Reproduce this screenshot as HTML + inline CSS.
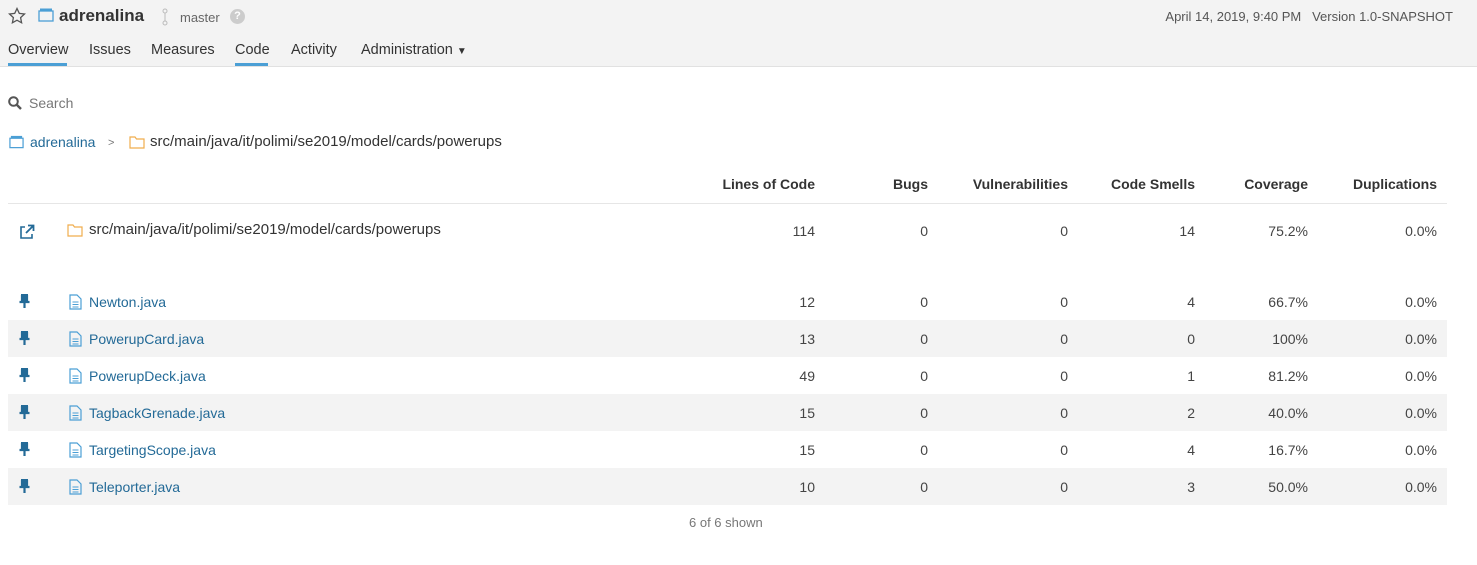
<!DOCTYPE html>
<html><head><style>
body{margin:0;width:1477px;height:565px;background:#fff;font-family:"Liberation Sans",sans-serif;font-size:14px;color:#444;position:relative;overflow:hidden}
.hdr{position:absolute;left:0;top:0;width:1477px;height:66px;background:#f3f3f3;border-bottom:1px solid #e1e1e1}
.a{position:absolute;white-space:nowrap}
.tab{position:absolute;top:42px;font-size:14.5px;color:#333}
.ul{position:absolute;top:63px;height:3px;background:#4b9fd5}
.blue{color:#236a97}
.row{position:absolute;left:8px;width:1439px;height:37px}
.alt{background:#f3f3f3}
.c{position:absolute;top:11px;text-align:right;white-space:nowrap}
</style></head><body>
<div class="hdr"></div>
<svg class="a" style="left:8px;top:7px" width="18" height="18" viewBox="0 0 18 18"><path d="M9 1.5l2.3 4.9 5.2.6-3.9 3.6 1 5.2L9 13.2l-4.6 2.6 1-5.2L1.5 7l5.2-.6z" fill="none" stroke="#555" stroke-width="1.3"/></svg>
<svg class="a" style="left:38px;top:8px" width="16" height="14" viewBox="0 0 16 14"><rect x="1" y="3" width="14" height="10" fill="none" stroke="#4b9fd5" stroke-width="1.3"/><rect x="2" y="0.5" width="12" height="2.5" fill="#4b9fd5"/></svg>
<div class="a" style="left:59px;top:6px;font-size:17px;font-weight:bold;color:#333">adrenalina</div>
<svg class="a" style="left:162px;top:8px" width="6" height="18"><circle cx="3" cy="3" r="2" fill="none" stroke="#bbb"/><circle cx="3" cy="15" r="2" fill="none" stroke="#bbb"/><line x1="3" y1="5" x2="3" y2="13" stroke="#bbb"/></svg>
<div class="a" style="left:180px;top:10px;font-size:13px;color:#666">master</div>
<div class="a" style="left:230px;top:9px;width:15px;height:15px;border-radius:50%;background:#ccc;color:#fff;font-size:11px;font-weight:bold;text-align:center;line-height:15px">?</div>
<div class="a" style="right:24px;top:9px;font-size:13px;color:#555">April 14, 2019, 9:40 PM&nbsp;&nbsp;&nbsp;Version 1.0-SNAPSHOT</div>
<div class="tab" style="left:8px">Overview</div><div class="ul" style="left:8px;width:59px"></div>
<div class="tab" style="left:89px">Issues</div>
<div class="tab" style="left:151px">Measures</div>
<div class="tab" style="left:235px">Code</div><div class="ul" style="left:235px;width:33px"></div>
<div class="tab" style="left:291px">Activity</div>
<div class="tab" style="left:361px">Administration <span style="font-size:10px">▼</span></div>
<svg class="a" style="left:8px;top:96px" width="14" height="14"><circle cx="5.5" cy="5.5" r="4.3" fill="none" stroke="#555" stroke-width="2"/><line x1="8.5" y1="8.5" x2="13" y2="13" stroke="#555" stroke-width="2.4"/></svg>
<div class="a" style="left:29px;top:95px;color:#777">Search</div>
<svg class="a" style="left:9px;top:135px" width="15" height="14" viewBox="0 0 16 14"><rect x="1" y="3" width="14" height="10" fill="none" stroke="#4b9fd5" stroke-width="1.3"/><rect x="2" y="0.5" width="12" height="2.5" fill="#4b9fd5"/></svg>
<div class="a blue" style="left:30px;top:134px">adrenalina</div>
<div class="a" style="left:108px;top:137px;font-size:11px;color:#777">&gt;</div>
<svg class="a" style="left:129px;top:135px" width="16" height="14"><path d="M1 2h5l1.5 2H15v9H1z" fill="none" stroke="#f0ad4e" stroke-width="1.2"/></svg>
<div class="a" style="left:150px;top:133px;color:#333;font-size:15px">src/main/java/it/polimi/se2019/model/cards/powerups</div>
<div class="a" style="left:8px;top:203px;width:1439px;height:1px;background:#e6e6e6"></div>
<div class="a" style="top:176px;left:0;width:1477px;font-weight:bold;color:#333">
<span class="a" style="right:662px">Lines of Code</span><span class="a" style="right:549px">Bugs</span><span class="a" style="right:409px">Vulnerabilities</span><span class="a" style="right:282px">Code Smells</span><span class="a" style="right:169px">Coverage</span><span class="a" style="right:40px">Duplications</span></div>
<svg class="a" style="left:19px;top:224px" width="16" height="15"><path d="M6 3H2v11h11v-4" fill="none" stroke="#236a97" stroke-width="1.6"/><path d="M7 9l7-7M9 1.5h5.5V7" fill="none" stroke="#236a97" stroke-width="1.8"/></svg>
<svg class="a" style="left:67px;top:223px" width="16" height="14"><path d="M1 2h5l1.5 2H15v9H1z" fill="none" stroke="#f0ad4e" stroke-width="1.2"/></svg>
<div class="a" style="left:89px;top:221px;color:#333;font-size:15px">src/main/java/it/polimi/se2019/model/cards/powerups</div>
<div class="row" style="top:212px">
<span class="c" style="right:632px">114</span><span class="c" style="right:519px">0</span><span class="c" style="right:379px">0</span><span class="c" style="right:252px">14</span><span class="c" style="right:139px">75.2%</span><span class="c" style="right:10px">0.0%</span></div>

<div id="rows"></div>
<script>
var d=[["Newton.java",12,4,"66.7%"],["PowerupCard.java",13,0,"100%"],["PowerupDeck.java",49,1,"81.2%"],["TagbackGrenade.java",15,2,"40.0%"],["TargetingScope.java",15,4,"16.7%"],["Teleporter.java",10,3,"50.0%"]];
var h="";d.forEach(function(r,i){var t=283+37*i;
h+='<div class="row'+(i%2?' alt':'')+'" style="top:'+t+'px">'+
'<svg class="a" style="left:11px;top:11px" width="11" height="14"><path d="M2 1h7M3 1v6M8 1v6M0.5 8h10M5.5 8v6" stroke="#236a97" stroke-width="2.2" fill="none"/><rect x="3" y="1" width="5" height="6" fill="#236a97"/></svg>'+
'<svg class="a" style="left:61px;top:11px" width="13" height="16"><path d="M1 1h7l4 4v10H1z" fill="none" stroke="#4b9fd5" stroke-width="1.2"/><path d="M3.5 8h6M3.5 10.5h6M3.5 13h6" stroke="#4b9fd5"/></svg>'+
'<span class="a blue" style="left:81px;top:11px">'+r[0]+'</span>'+
'<span class="c" style="right:632px">'+r[1]+'</span><span class="c" style="right:519px">0</span><span class="c" style="right:379px">0</span><span class="c" style="right:252px">'+r[2]+'</span><span class="c" style="right:139px">'+r[3]+'</span><span class="c" style="right:10px">0.0%</span></div>';});
document.getElementById("rows").innerHTML=h;
</script>
<div class="a" style="left:689px;top:515px;font-size:13px;color:#777">6 of 6 shown</div>
</body></html>
